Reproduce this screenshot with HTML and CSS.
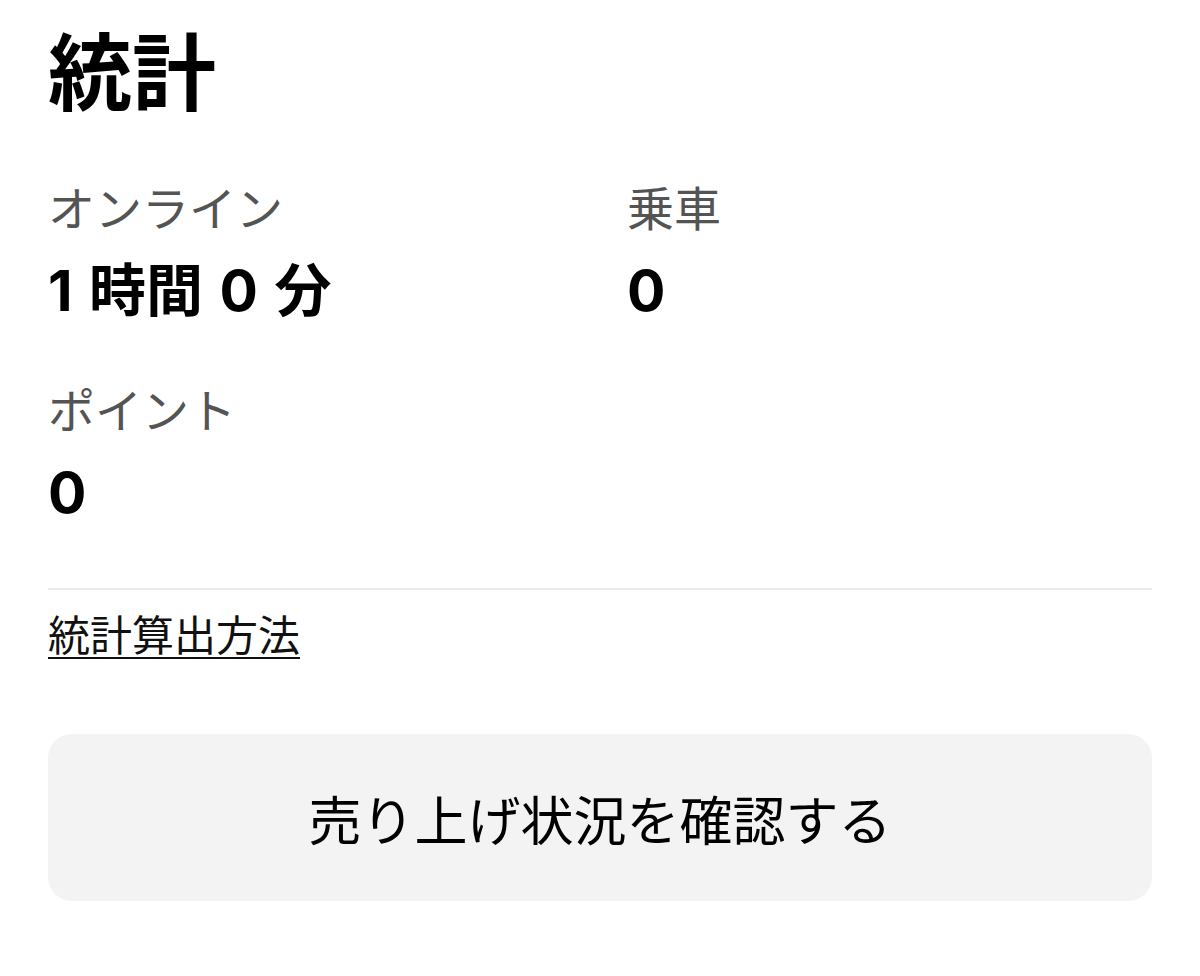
FILE: index.html
```html
<!DOCTYPE html>
<html lang="ja">
<head>
    <meta charset="UTF-8">
    <meta name="viewport" content="width=device-width, initial-scale=1.0">
    <title>統計</title>
    <link rel="stylesheet" href="styles.css">
</head>
<body>
    <div class="container">
        <h1 class="title">統計</h1>

        <div class="stats">
            <div class="stat">
                <div class="stat-label">オンライン</div>
                <div class="stat-value">1 時間 0 分</div>
            </div>
            <div class="stat">
                <div class="stat-label">乗車</div>
                <div class="stat-value">0</div>
            </div>
            <div class="stat">
                <div class="stat-label">ポイント</div>
                <div class="stat-value">0</div>
            </div>
        </div>

        <hr class="divider">

        <a class="method-link" href="#">統計算出方法</a>

        <button class="earnings-button">売り上げ状況を確認する</button>
    </div>
</body>
</html>
```

FILE: styles.css
```css
body {
    margin: 0;
    padding: 0;
    background-color: #fff;
    color: #000;
    font-family: Inter, "Noto Sans CJK JP", sans-serif;
}

.container {
    padding: 24px 48px;
}

.title {
    margin: 0;
    font-size: 84px;
    line-height: 100px;
    font-weight: 700;
}

.stats {
    display: grid;
    grid-template-columns: 1fr 1fr;
    column-gap: 54px;
    row-gap: 60px;
    margin-top: 57px;
}

.stat-label {
    font-size: 47px;
    line-height: 56px;
    color: #545454;
}

.stat-value {
    margin-top: 22px;
    font-size: 57px;
    line-height: 64px;
    font-weight: 700;
    word-spacing: 3px;
}

.divider {
    margin: 63px 0 0 0;
    border: none;
    height: 2px;
    background-color: #ebebeb;
}

.method-link {
    display: inline-block;
    margin-top: 21px;
    font-size: 42px;
    line-height: 50px;
    color: #111;
    text-decoration: underline;
    text-decoration-thickness: 2px;
    text-underline-offset: 6px;
}

.earnings-button {
    display: block;
    width: 100%;
    height: 167px;
    margin-top: 73px;
    border: none;
    border-radius: 24px;
    background-color: #f3f3f3;
    color: #000;
    font-family: Inter, "Noto Sans CJK JP", sans-serif;
    font-size: 53px;
    cursor: pointer;
}
```
